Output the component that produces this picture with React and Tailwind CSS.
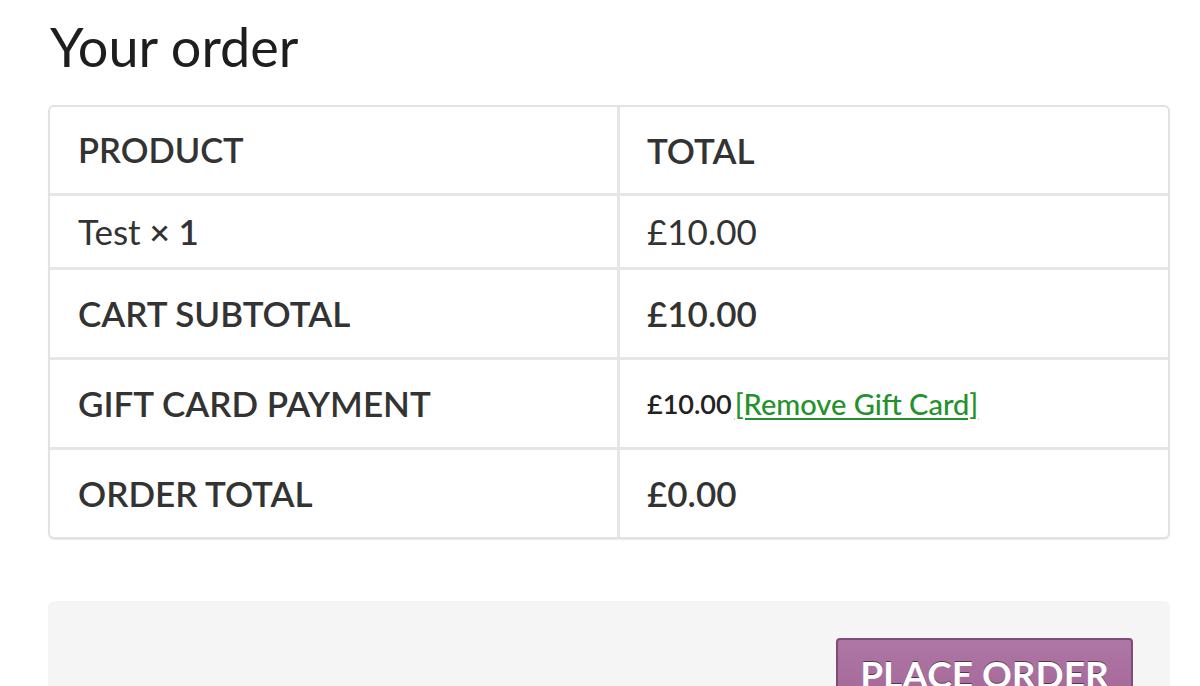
export default function App() {
  const rowBase = "grid grid-cols-[567px_1fr] border-t-[3px] border-[#e6e6e6]";
  return (
    <div className="w-[1200px] h-[686px] overflow-hidden bg-white px-[48px] text-[#333333]" style={{ fontFamily: "Lato, 'Open Sans', sans-serif" }}>
      <h3 className="pt-[20px] pl-[2px] text-[54px] leading-none font-normal text-[#1e1e1e]">Your order</h3>
      <div className="mt-[31px] w-[1122px] rounded-[6px] border-2 border-[#e2e2e2] bg-white shadow-[0_1px_1px_rgba(0,0,0,0.08)]">
        <div className="grid grid-cols-[567px_1fr] h-[86px]">
          <div className="flex items-center pl-[28px] text-[34.5px] leading-none font-semibold">PRODUCT</div>
          <div className="flex items-center border-l-[3px] border-[#e6e6e6] pl-[27px] text-[35px] leading-none font-semibold">TOTAL</div>
        </div>
        <div className={rowBase + " h-[74px]"}>
          <div className="flex items-center pl-[28px] text-[35px] leading-none">
            Test&nbsp;<strong className="font-semibold">× 1</strong>
          </div>
          <div className="flex items-center border-l-[3px] border-[#e6e6e6] pl-[27px] text-[35px] leading-none">£10.00</div>
        </div>
        <div className={rowBase + " h-[90px]"}>
          <div className="flex items-center pl-[28px] text-[35px] leading-none font-semibold">CART SUBTOTAL</div>
          <div className="flex items-center border-l-[3px] border-[#e6e6e6] pl-[27px] text-[35px] leading-none font-semibold">£10.00</div>
        </div>
        <div className={rowBase + " h-[90px]"}>
          <div className="flex items-center pl-[28px] text-[35px] leading-none font-semibold">GIFT CARD PAYMENT</div>
          <div className="flex items-center border-l-[3px] border-[#e6e6e6] pl-[27px] text-[27px] leading-none">
            <span className="font-semibold text-[#222222]">£10.00</span>
            <a href="#" className="ml-[3px] text-[29px] font-medium text-[#22922b] underline decoration-2 underline-offset-[3px]">[Remove Gift Card]</a>
          </div>
        </div>
        <div className={rowBase + " h-[90px]"}>
          <div className="flex items-center pl-[28px] text-[35px] leading-none font-semibold">ORDER TOTAL</div>
          <div className="flex items-center border-l-[3px] border-[#e6e6e6] pl-[27px] text-[35px] leading-none font-semibold">£0.00</div>
        </div>
      </div>
      <div className="mt-[62px] w-[1122px] h-[140px] rounded-[6px] bg-[#f5f5f5] flex justify-end pr-[37px] pt-[37px]">
        <button className="h-[76px] w-[297px] rounded-[4px] border-2 border-[#7e4c75] bg-gradient-to-b from-[#ad77a4] to-[#a46497] text-white text-[37px] leading-none font-bold flex items-start justify-center [text-shadow:0_-1px_0_rgba(0,0,0,0.5)]">
          <span className="pt-[15px]">PLACE ORDER</span>
        </button>
      </div>
    </div>
  );
}
